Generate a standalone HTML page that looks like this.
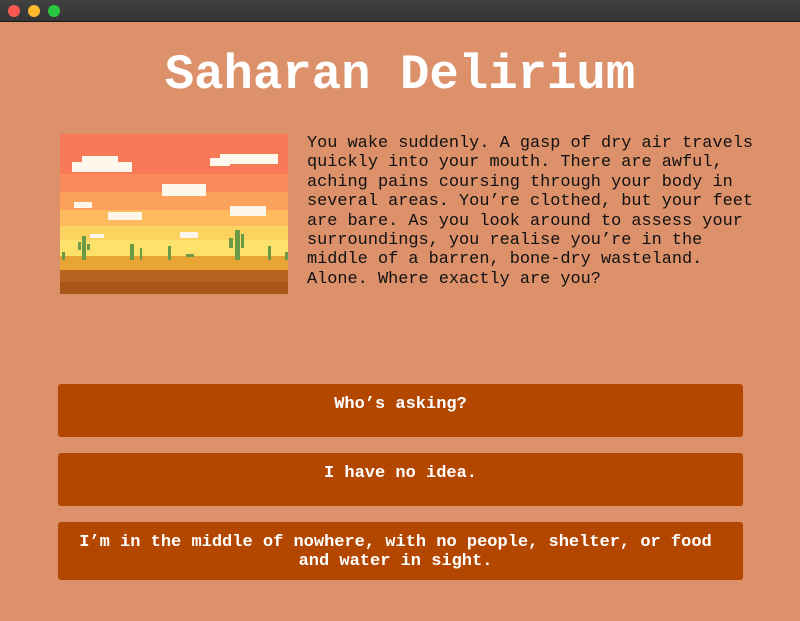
<!DOCTYPE html>
<html><head><style>
*{margin:0;padding:0;box-sizing:border-box}
body{width:800px;height:621px;background:#dc916b;overflow:hidden;font-family:"Courier New","Liberation Mono",monospace;position:relative}
.bar{position:absolute;left:0;top:0;width:800px;height:22px;background:linear-gradient(#414141,#353535);border-bottom:1px solid #1a1a1a}
.dot{position:absolute;top:5px;width:12px;height:12px;border-radius:50%}
h1{position:absolute;left:0;width:800px;top:48px;text-align:center;color:#fff;font-size:49px;font-weight:bold;line-height:54px}
.img{position:absolute;left:60px;top:134px;width:228px;height:160px}
.txt{position:absolute;left:307px;top:134px;width:460px;font-size:16.9px;line-height:19.4px;color:#111}
.btn{position:absolute;left:58px;width:685px;background:#b34700;border-radius:3px;color:#fff;font-weight:bold;font-size:17px;line-height:19px;text-align:center;padding-top:11px}
</style></head><body>
<div class="bar"><div class="dot" style="left:8px;background:#fd5754"></div><div class="dot" style="left:28px;background:#febb2e"></div><div class="dot" style="left:48px;background:#28c840"></div></div>
<h1>Saharan Delirium</h1>
<svg class="img" viewBox="0 0 228 160" shape-rendering="crispEdges">
<rect width="228" height="40" fill="#f87957"/>
<rect y="40" width="228" height="18" fill="#fb8a5a"/>
<rect y="58" width="228" height="18" fill="#fca15b"/>
<rect y="76" width="228" height="16" fill="#fdbb5e"/>
<rect y="92" width="228" height="14" fill="#fdd35f"/>
<rect y="106" width="228" height="18" fill="#fce16a"/>
<rect y="122" width="228" height="14" fill="#e8a533"/>
<rect y="136" width="228" height="24" fill="#b8621f"/>
<rect y="148" width="228" height="12" fill="#a9561b"/>
<g fill="#fdf6ea">
<rect x="12" y="28" width="60" height="10"/><rect x="22" y="22" width="36" height="8"/><rect x="160" y="20" width="58" height="10"/><rect x="150" y="24" width="20" height="8"/>
<rect x="102" y="50" width="44" height="12"/><rect x="14" y="68" width="18" height="6"/><rect x="48" y="78" width="34" height="8"/><rect x="170" y="72" width="36" height="10"/><rect x="120" y="98" width="18" height="6"/><rect x="30" y="100" width="14" height="4"/>
</g>
<g fill="#6a9a45">
<rect x="22" y="102" width="4" height="24"/><rect x="18" y="108" width="3" height="8"/><rect x="27" y="110" width="3" height="6"/>
<rect x="70" y="110" width="4" height="16"/><rect x="80" y="114" width="2" height="12"/><rect x="108" y="112" width="3" height="14"/>
<rect x="175" y="96" width="5" height="30"/><rect x="169" y="104" width="4" height="10"/><rect x="181" y="100" width="3" height="14"/>
<rect x="208" y="112" width="3" height="14"/><rect x="126" y="120" width="8" height="3"/><rect x="2" y="118" width="3" height="8"/><rect x="225" y="118" width="3" height="8"/>
</g>
</svg>
<div class="txt">You wake suddenly. A gasp of dry air travels quickly into your mouth. There are awful, aching pains coursing through your body in several areas. You’re clothed, but your feet are bare. As you look around to assess your surroundings, you realise you’re in the middle of a barren, bone-dry wasteland. Alone. Where exactly are you?</div>
<div class="btn" style="top:384px;height:53px">Who’s asking?</div>
<div class="btn" style="top:453px;height:53px">I have no idea.</div>
<div class="btn" style="top:522px;height:58px;padding-left:10px;padding-right:20px">I’m in the middle of nowhere, with no people, shelter, or food and water in sight.</div>
</body></html>
